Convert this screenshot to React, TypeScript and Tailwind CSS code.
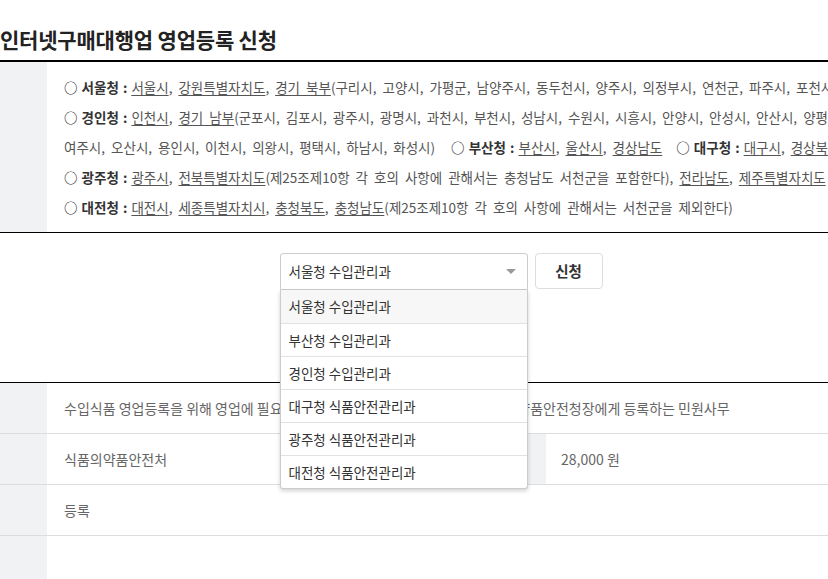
import React from 'react';

const font = { fontFamily: '"Noto Sans CJK KR", "Noto Sans", sans-serif' };

const options = [
  '서울청 수입관리과',
  '부산청 수입관리과',
  '경인청 수입관리과',
  '대구청 식품안전관리과',
  '광주청 식품안전관리과',
  '대전청 식품안전관리과',
];

function U({ children }: { children: React.ReactNode }) {
  return <span className="underline underline-offset-2">{children}</span>;
}

function Label({ children }: { children: React.ReactNode }) {
  return <span className="font-bold text-[#333] [word-spacing:1px]">○ {children} : </span>;
}

export default function App() {
  return (
    <div className="w-full h-[579px] overflow-hidden bg-white" style={font}>
      <div className="w-[882px]">
        <h1 className="pt-[27px] pb-[9px] text-[21px] leading-[24px] font-bold tracking-[-0.2px] text-[#222] whitespace-nowrap">
          인터넷구매대행업 영업등록 신청
        </h1>

        <div className="flex border-t-2 border-b border-black w-[1100px]">
          <div className="w-[47px] shrink-0 bg-[#f1f2f4]" />
          <div className="pl-[17px] py-[10px] text-[13.5px] leading-[30px] [word-spacing:3px] text-[#555] whitespace-nowrap">
            <div>
              <Label>서울청</Label>
              <U>서울시</U>, <U>강원특별자치도</U>, <U>경기 북부</U>(구리시, 고양시, 가평군, 남양주시, 동두천시, 양주시, 의정부시, 연천군, 파주시, 포천시)
            </div>
            <div>
              <Label>경인청</Label>
              <U>인천시</U>, <U>경기 남부</U>(군포시, 김포시, 광주시, 광명시, 과천시, 부천시, 성남시, 수원시, 시흥시, 안양시, 안성시, 안산시, 양평군,
            </div>
            <div>
              여주시, 오산시, 용인시, 이천시, 의왕시, 평택시, 하남시, 화성시)
              <span className="ml-[16px]"><Label>부산청</Label></span>
              <U>부산시</U>, <U>울산시</U>, <U>경상남도</U>
              <span className="ml-[14px]"><Label>대구청</Label></span>
              <U>대구시</U>, <U>경상북도</U>
            </div>
            <div>
              <Label>광주청</Label>
              <U>광주시</U>, <U>전북특별자치도</U>(제25조제10항 각 호의 사항에 관해서는 충청남도 서천군을 포함한다), <U>전라남도</U>, <U>제주특별자치도</U>
            </div>
            <div>
              <Label>대전청</Label>
              <U>대전시</U>, <U>세종특별자치시</U>, <U>충청북도</U>, <U>충청남도</U>(제25조제10항 각 호의 사항에 관해서는 서천군을 제외한다)
            </div>
          </div>
        </div>

        <div className="flex justify-center gap-[7px] pt-[20px] h-[149px]">
          <div className="relative w-[248px]">
            <div className="h-[37px] flex items-center justify-between pl-[8px] pr-[11px] border border-[#ccc] rounded-t-[3px] bg-white text-[13.5px] text-[#333]">
              <span>서울청 수입관리과</span>
              <svg width="10" height="6" viewBox="0 0 10 6">
                <path d="M0 0 L10 0 L5 5 Z" fill="#999" />
              </svg>
            </div>
            <ul className="absolute left-0 top-[37px] z-10 w-[248px] bg-white border border-[#ccc] border-t-0 rounded-b-[3px] shadow-[0_2px_4px_rgba(0,0,0,0.18)] text-[13.5px] text-[#333]">
              {options.map((o, i) => (
                <li
                  key={o}
                  className={
                    'h-[33px] flex items-center pl-[8px] ' +
                    (i > 0 ? 'border-t border-[#e2e2e2] ' : '') +
                    (i === 0 ? 'bg-[#f7f7f7]' : '')
                  }
                >
                  {o}
                </li>
              ))}
            </ul>
          </div>
          <button className="w-[68px] h-[36px] border border-[#ddd] rounded-[4px] bg-white text-[14.5px] font-bold text-[#333]">
            신청
          </button>
        </div>

        <div className="w-[1100px] border-t border-black text-[14px] text-[#666]">
          <div className="flex h-[51px] border-b border-[#ddd]">
            <div className="w-[47px] shrink-0 bg-[#f1f2f4]" />
            <div className="pl-[17px] flex items-center whitespace-nowrap">
              수입식품 영업등록을 위해 영업에 필요한 시설기준 등을 갖추어 관할 지방식품의약품안전청장에게 등록하는 민원사무
            </div>
          </div>
          <div className="flex h-[51px] border-b border-[#ddd]">
            <div className="w-[47px] shrink-0 bg-[#f1f2f4]" />
            <div className="w-[399px] shrink-0 pl-[17px] flex items-center">식품의약품안전처</div>
            <div className="w-[100px] shrink-0 bg-[#f1f2f4] flex items-center justify-center">수수료</div>
            <div className="pl-[15px] flex items-center">28,000 원</div>
          </div>
          <div className="flex h-[51px] border-b border-[#ddd]">
            <div className="w-[47px] shrink-0 bg-[#f1f2f4]" />
            <div className="pl-[17px] flex items-center">등록</div>
          </div>
          <div className="flex h-[60px]">
            <div className="w-[47px] shrink-0 bg-[#f1f2f4]" />
            <div />
          </div>
        </div>
      </div>
    </div>
  );
}
